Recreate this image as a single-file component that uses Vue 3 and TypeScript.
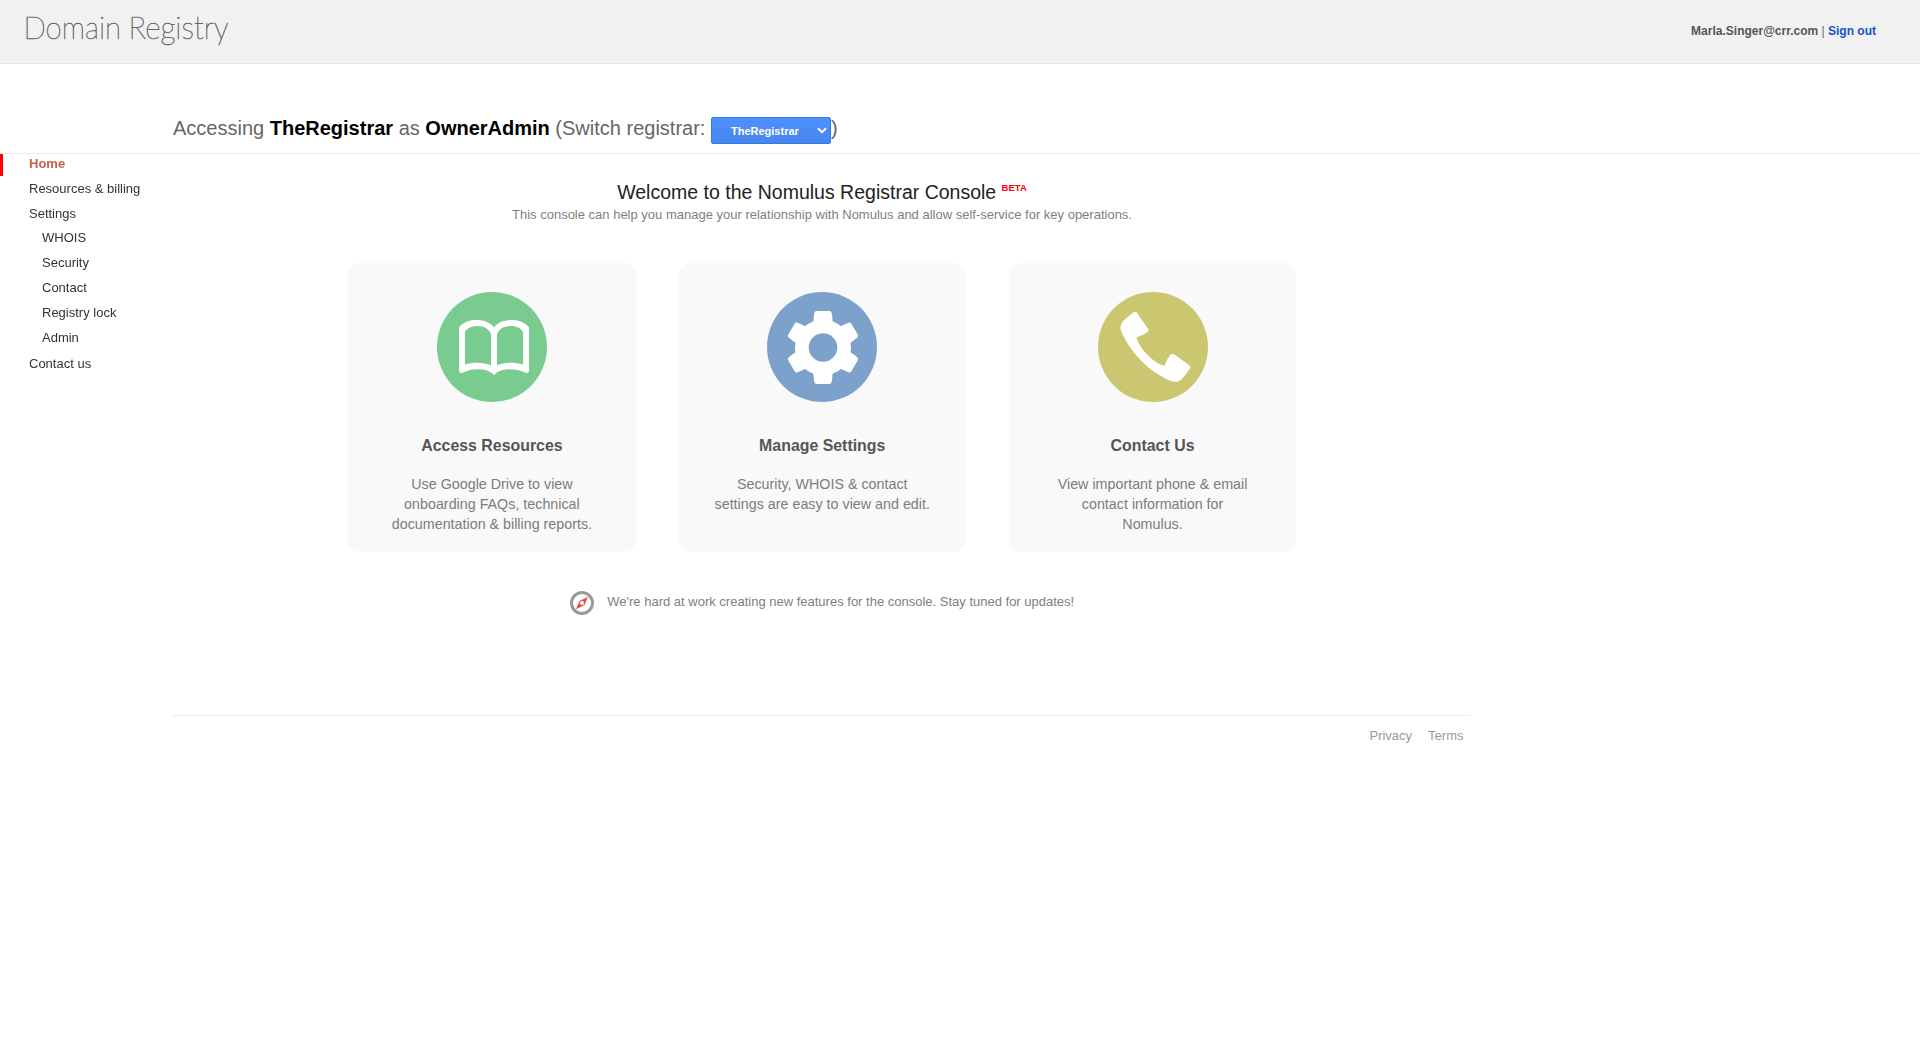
<script setup lang="ts">
interface NavItem {
  label: string
  active?: boolean
  children?: string[]
}

interface Card {
  kind: 'book' | 'gear' | 'phone'
  color: string
  title: string
  lines: string[]
}

const nav: NavItem[] = [
  { label: 'Home', active: true },
  { label: 'Resources & billing' },
  { label: 'Settings', children: ['WHOIS', 'Security', 'Contact', 'Registry lock', 'Admin'] },
  { label: 'Contact us' },
]

const cards: Card[] = [
  {
    kind: 'book',
    color: '#7acb90',
    title: 'Access Resources',
    lines: ['Use Google Drive to view', 'onboarding FAQs, technical', 'documentation & billing reports.'],
  },
  {
    kind: 'gear',
    color: '#7ca2cc',
    title: 'Manage Settings',
    lines: ['Security, WHOIS & contact', 'settings are easy to view and edit.'],
  },
  {
    kind: 'phone',
    color: '#cbc771',
    title: 'Contact Us',
    lines: ['View important phone & email', 'contact information for', 'Nomulus.'],
  },
]

const teeth: number[] = [0, 60, 120, 180, 240, 300]
</script>

<template>
  <div class="page">
    <header class="topbar">
      <svg class="logo" width="230" height="60" viewBox="0 0 230 60" role="img" aria-label="Domain Registry">
        <text x="3.500" y="39" textLength="97.500" lengthAdjust="spacingAndGlyphs">Domain</text>
        <text x="108.500" y="39" textLength="100" lengthAdjust="spacingAndGlyphs">Registry</text>
      </svg>
      <div class="user"><b>Marla.Singer@crr.com</b> | <a>Sign out</a></div>
    </header>

    <div class="context">
      <span>Accessing <b>TheRegistrar</b> as <b>OwnerAdmin</b> (Switch registrar:&nbsp;</span>
      <button class="select" type="button">
        <span>TheRegistrar</span>
        <svg width="10" height="7" viewBox="0 0 10 7"><path d="M1 1.2 5 5.2 9 1.2" /></svg>
      </button>
      <span>)</span>
    </div>

    <div class="body">
      <nav class="sidebar">
        <ul>
          <li v-for="item in nav" :key="item.label">
            <a :class="{ active: item.active }">{{ item.label }}</a>
            <ul v-if="item.children" class="sub">
              <li v-for="child in item.children" :key="child"><a>{{ child }}</a></li>
            </ul>
          </li>
        </ul>
      </nav>

      <main class="content">
        <h1>Welcome to the Nomulus Registrar Console <sup>BETA</sup></h1>
        <p class="lead">
          This console can help you manage your relationship with Nomulus and allow self-service for key operations.
        </p>

        <div class="cards">
          <section v-for="card in cards" :key="card.kind" class="card">
            <svg class="icon" width="110" height="110" viewBox="0 0 110 110">
              <circle cx="55" cy="55" r="55" :fill="card.color" />
              <path
                v-if="card.kind === 'book'"
                fill="#fff"
                fill-rule="evenodd"
                d="M57 35.500C53.500 30.500 47 28 39.500 28C32 28 25.500 30.500 22 35.500V79Q22.500 82 26 80.500C34 76 49 76 54 80.500L57 83L60 80.500C65 76 80 76 88 80.500Q91.500 82 92 79V35.500C88.500 30.500 82 28 74.500 28C67 28 60.500 30.500 57 35.500ZM28 40C30 36 35 34 40.500 34C47 34 52.500 37 54 42.500V73.500C47 70 35.500 70 28 72.700ZM86 40C84 36 79 34 73.500 34C67 34 61.500 37 60 42.500V73.500C67 70 78.500 70 86 72.700Z"
              />
              <g v-else-if="card.kind === 'gear'" fill="#fff" stroke="#fff">
                <circle cx="56" cy="55.500" r="28" stroke="none" />
                <path
                  v-for="angle in teeth"
                  :key="angle"
                  d="M49.800 21.500H62.200Q63 26 63.300 34H48.700Q49 26 49.800 21.500Z"
                  stroke-width="5"
                  stroke-linejoin="round"
                  :transform="`rotate(${angle} 56 55.5)`"
                />
                <circle cx="56" cy="55.500" r="14.300" stroke="none" :fill="card.color" />
              </g>
              <path
                v-else
                fill="#fff"
                d="M35.500 20.400Q37.600 18.900 39 21L50.200 37Q51.300 39 49.300 40.200C46 42.500 42 44 38.500 45.300C40.500 55.500 55.500 71.500 66.500 73.800C68 69.500 70 66 72.400 62.800Q74 61 76 62.300L91.300 73.200Q93.300 74.800 92 76.500C88 82 84.500 87.500 80 89.500C76 91 69 87.500 62 83.500C44 73 29 54 23 38.500C20.500 31 28 26 35.500 20.400Z"
              />
            </svg>
            <h2>{{ card.title }}</h2>
            <p><span v-for="line in card.lines" :key="line">{{ line }}</span></p>
          </section>
        </div>

        <div class="notice">
          <svg width="24" height="24" viewBox="0 0 24 24">
            <circle cx="12" cy="12" r="10.500" fill="#fff" stroke="#999" stroke-width="3" />
            <path fill="#e84d3d" fill-rule="evenodd" d="M18 5.800 14.500 14 6 18.200 9.500 10ZM12 9.900a2.100 2.100 0 1 0 0 4.200 2.100 2.100 0 0 0 0-4.200Z" />
          </svg>
          <span>We're hard at work creating new features for the console. Stay tuned for updates!</span>
        </div>

        <footer class="footer"><a>Privacy</a><a>Terms</a></footer>
      </main>
    </div>
  </div>
</template>

<style>
body {
  margin: 0;
  background: #fff;
}
</style>

<style scoped>
.page {
  font-family: "Liberation Sans", Arial, sans-serif;
  font-size: 13px;
  line-height: 15px;
  color: #666;
}

.topbar {
  display: flex;
  justify-content: space-between;
  box-sizing: border-box;
  height: 64px;
  padding: 0 44px 0 20px;
  background: #f1f1f1;
  border-bottom: 1px solid #e5e5e5;
}

.logo {
  overflow: visible;
}

.logo text {
  font-family: Lato, sans-serif;
  font-size: 31px;
  font-weight: 200;
  fill: #666;
  stroke: #666;
  stroke-width: 0.6px;
}

.user {
  padding-top: 24px;
  font-size: 12px;
  white-space: nowrap;
}

.user b {
  color: #555;
}

.user a {
  font-weight: bold;
  color: #15c;
}

.context {
  display: flex;
  box-sizing: border-box;
  height: 90px;
  padding: 53px 0 0 173px;
  font-size: 20px;
  line-height: 23px;
  color: #666;
  white-space: nowrap;
  border-bottom: 1px solid #ebebeb;
}

.context b {
  color: #000;
}

.select {
  display: flex;
  align-items: center;
  justify-content: space-between;
  box-sizing: border-box;
  width: 120px;
  height: 27px;
  padding: 1px 3px 0 19px;
  font: bold 11px/13px "Liberation Sans", Arial, sans-serif;
  color: #fff;
  background: linear-gradient(#4d90fe, #4787ed);
  border: 1px solid #3079ed;
  border-radius: 2px;
}

.select svg {
  margin-top: -2px;
}

.select path {
  fill: none;
  stroke: #fff;
  stroke-width: 2;
}

.body {
  display: flex;
}

.sidebar {
  flex: 0 0 173px;
  will-change: transform;
}

.sidebar ul {
  margin: 0;
  padding: 0;
  list-style: none;
}

.sidebar a {
  display: block;
  height: 20px;
  margin-bottom: 3px;
  padding: 2px 0 0 26px;
  line-height: 15px;
  color: #333;
  border-left: 3px solid transparent;
}

.sidebar > ul > li:not(:last-child) {
  margin-bottom: 3px;
}

.sidebar > ul > li > a.active {
  font-weight: bold;
  color: #c7604c;
  border-left-color: #f00;
}

.sidebar .sub {
  margin: -1px 0 4px;
  padding-left: 13px;
}

.content {
  width: 1298px;
  text-align: center;
}

h1 {
  margin: 27px 0 0;
  font-size: 19.500px;
  font-weight: normal;
  line-height: 23px;
  color: #222;
}

sup {
  position: relative;
  top: -8px;
  font-size: 9.500px;
  font-weight: bold;
  line-height: 0;
  vertical-align: baseline;
  color: #f00;
}

.lead {
  margin: 3px 0 0;
  color: #808080;
}

.cards {
  display: flex;
  justify-content: center;
  gap: 43px;
  margin-top: 41px;
  padding-left: 0.500px;
}

.card {
  display: flex;
  flex-direction: column;
  align-items: center;
  box-sizing: border-box;
  width: 287.300px;
  height: 289px;
  padding-top: 29px;
  background: #f9f9f9;
  border-radius: 12px;
}

.icon {
  display: block;
}

h2 {
  margin: 35px 0 0;
  font-size: 15.900px;
  line-height: 18px;
  color: #555;
}

.card p {
  margin: 19px 0 0;
  font-size: 14.300px;
  line-height: 20px;
  color: #7c7c7c;
}

.card p span {
  display: block;
}

.notice {
  display: flex;
  justify-content: center;
  gap: 13.500px;
  margin-top: 39px;
  line-height: 21px;
  color: #808080;
}

.footer {
  display: flex;
  justify-content: flex-end;
  gap: 16px;
  margin-top: 100px;
  padding: 12px 7.500px 0 0;
  color: #999;
  border-top: 1px solid #ebebeb;
}
</style>
